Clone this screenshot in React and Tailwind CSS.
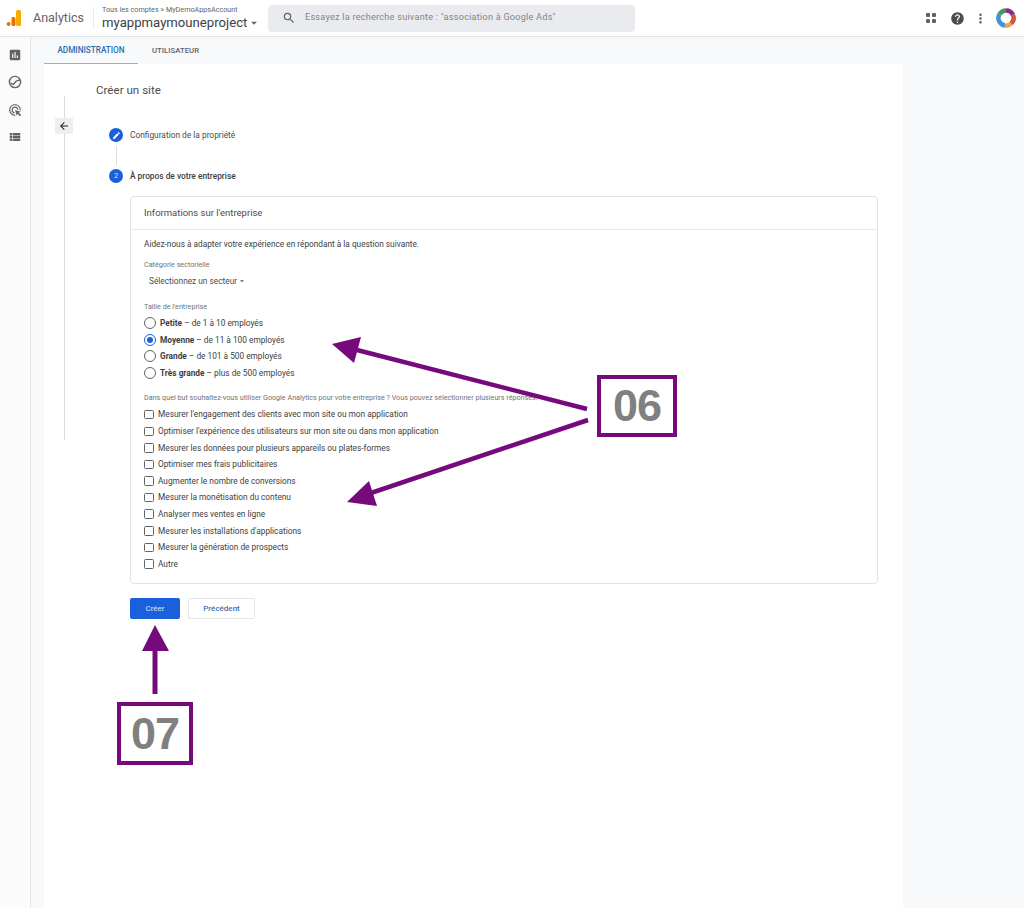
import React from "react";
import { MdAssessment, MdSearch, MdHelp, MdMoreVert, MdArrowBack, MdEdit, MdViewList, MdArrowDropDown, MdAdsClick } from "react-icons/md";

const font = "font-['Roboto','Liberation_Sans',sans-serif]";

function Logo() {
  return (
    <svg width="16" height="18" viewBox="0 0 16 18" className="shrink-0">
      <rect x="10" y="1" width="5" height="16" rx="1.5" fill="#f9ab00" />
      <rect x="5.5" y="8" width="4" height="9" rx="1.5" fill="#e37400" />
      <circle cx="2.6" cy="15" r="2" fill="#e37400" />
    </svg>
  );
}

function ExploreIcon() {
  return (
    <svg width="14" height="14" viewBox="0 0 14 14" fill="none" stroke="#5f6368" strokeWidth="1.4">
      <circle cx="7" cy="7" r="5.6" />
      <path d="M2.6 8.2 5.4 9.4 8.2 6 12 4.8" />
    </svg>
  );
}

function Avatar() {
  return (
    <svg width="20" height="20" viewBox="0 0 20 20" fill="none" strokeWidth="4.5">
      <path d="M3.6 6A7.6 7.6 0 0 1 10 2.4" stroke="#3f9b4f" />
      <path d="M10 2.4A7.6 7.6 0 0 1 17 7" stroke="#8e2a8b" />
      <path d="M17 7A7.6 7.6 0 0 1 15 15.6" stroke="#d8503f" />
      <path d="M15 15.6A7.6 7.6 0 0 1 9 17.6" stroke="#f0a53a" />
      <path d="M9 17.6A7.6 7.6 0 0 1 3.6 6" stroke="#4a90d9" />
      <path d="M10 5.5 14 10 10 14.5 6 10Z" fill="#fff" stroke="none" />
    </svg>
  );
}

function Radio({ checked, bold, rest }) {
  return (
    <div className="flex h-[16.6px] items-center">
      <span className={`flex h-[12px] w-[12px] shrink-0 items-center justify-center rounded-full border ${checked ? "border-[#1a5fdc]" : "border-[#5f6368]"}`}>
        {checked && <span className="h-[6px] w-[6px] rounded-full bg-[#1a5fdc]" />}
      </span>
      <span className="ml-[4px] whitespace-nowrap text-[8.3px] text-[#3c4043]">
        <span className="font-bold">{bold}</span> – {rest}
      </span>
    </div>
  );
}

function Check({ label }) {
  return (
    <div className="flex h-[16.6px] items-center">
      <span className="h-[9.5px] w-[9.5px] shrink-0 rounded-[1.5px] border border-[#5f6368]" />
      <span className="ml-[4.5px] whitespace-nowrap text-[8.3px] text-[#3c4043]">{label}</span>
    </div>
  );
}

function Annotations() {
  return (
    <>
      <svg className="pointer-events-none absolute left-0 top-0" width="1024" height="908" viewBox="0 0 1024 908">
        <g fill="#760a7c" stroke="#760a7c">
          <path d="M357 350 587 409" strokeWidth="4.5" fill="none" />
          <path d="M332 344 361 337 354 363Z" strokeWidth="0" />
          <path d="M365 495 588 420" strokeWidth="4.5" fill="none" />
          <path d="M347 502 369 481 377 506Z" strokeWidth="0" />
          <path d="M155 645V694" strokeWidth="5" fill="none" />
          <path d="M155 625 142 651H169Z" strokeWidth="0" />
        </g>
      </svg>
      <div className="absolute left-[597px] top-[375px] flex h-[62px] w-[80px] items-center justify-center border-[4px] border-[#760a7c] bg-white font-['Liberation_Sans',sans-serif] text-[45px] font-bold tracking-[-1px] text-[#808080]">06</div>
      <div className="absolute left-[117px] top-[702px] flex h-[63px] w-[76px] items-center justify-center border-[4px] border-[#760a7c] bg-white font-['Liberation_Sans',sans-serif] text-[45px] font-bold tracking-[-1px] text-[#808080]">07</div>
    </>
  );
}

const goals = [
  "Mesurer l'engagement des clients avec mon site ou mon application",
  "Optimiser l'expérience des utilisateurs sur mon site ou dans mon application",
  "Mesurer les données pour plusieurs appareils ou plates-formes",
  "Optimiser mes frais publicitaires",
  "Augmenter le nombre de conversions",
  "Mesurer la monétisation du contenu",
  "Analyser mes ventes en ligne",
  "Mesurer les installations d'applications",
  "Mesurer la génération de prospects",
  "Autre",
];

export default function App() {
  return (
    <div className={`relative h-[908px] w-[1024px] overflow-hidden bg-[#f8f9fb] ${font}`}>
      <header className="flex h-[37px] items-center border-b border-[#e3e4e6] bg-white">
        <div className="ml-[6px] flex w-[21px]"><Logo /></div>
        <span className="ml-[6px] w-[60px] text-[12.5px] text-[#5f6368]">Analytics</span>
        <div className="h-[22px] w-px bg-[#e8eaed]" />
        <div className="ml-[8px] flex w-[166px] flex-col">
          <span className="whitespace-nowrap text-[7.2px] leading-[9px] text-[#5f6368]">Tous les comptes &gt; MyDemoAppsAccount</span>
          <div className="flex items-center">
            <span className="whitespace-nowrap text-[13.15px] leading-[17px] text-[#3c4043]">myappmaymouneproject</span>
            <MdArrowDropDown className="text-[14px] text-[#5f6368]" />
          </div>
        </div>
        <div className="flex h-[27px] w-[367px] items-center rounded-[4px] bg-[#e9ebee]">
          <MdSearch className="ml-[14px] text-[14px] text-[#5f6368]" />
          <span className="ml-[9px] whitespace-nowrap text-[9.1px] tracking-[0.25px] text-[#80868b]">Essayez la recherche suivante : "association à Google Ads"</span>
        </div>
        <div className="ml-auto flex items-center">
          <div className="grid grid-cols-2 gap-[2px]">
            <span className="h-[4px] w-[4px] rounded-[1px] bg-[#5f6368]" />
            <span className="h-[4px] w-[4px] rounded-[1px] bg-[#5f6368]" />
            <span className="h-[4px] w-[4px] rounded-[1px] bg-[#5f6368]" />
            <span className="h-[4px] w-[4px] rounded-[1px] bg-[#5f6368]" />
          </div>
          <MdHelp className="ml-[14px] text-[15px] text-[#4a4c50]" />
          <MdMoreVert className="ml-[8px] text-[15px] text-[#5f6368]" />
          <div className="ml-[8px] mr-[8px]"><Avatar /></div>
        </div>
      </header>

      <div className="flex h-[871px]">
        <aside className="flex w-[31px] shrink-0 flex-col items-center gap-[13.4px] border-r border-[#e3e4e6] bg-[#fbfbfc] pt-[11px] text-[#5f6368]">
          <MdAssessment className="text-[14px]" />
          <ExploreIcon />
          <MdAdsClick className="text-[14px]" />
          <MdViewList className="text-[14px]" />
        </aside>

        <main className="ml-[13px] flex w-[859px] flex-col">
          <nav className="flex h-[27px]">
            <div className="flex w-[94px] items-center justify-center border-b-[1.5px] border-[#e8a33d] pt-[1px] text-[8.2px] font-medium text-[#2b6cb0]">ADMINISTRATION</div>
            <div className="ml-[14px] flex items-center pt-[1px] text-[7.8px] font-medium text-[#5f6368]">UTILISATEUR</div>
          </nav>

          <section className="flex flex-1 bg-white">
            <div className="relative ml-[20px] mt-[32px] h-[344px] w-px shrink-0 bg-[#d9dadc]">
              <button className="absolute left-[-9px] top-[22px] flex h-[16px] w-[18px] items-center justify-center bg-[#eeeeee] text-[12px] text-[#202124]">
                <MdArrowBack />
              </button>
            </div>

            <div className="ml-[31px] flex flex-col">
              <h1 className="mt-[19px] text-[11.6px] font-normal leading-[14px] text-[#4a4c50]">Créer un site</h1>

              <div className="ml-[13px] mt-[31px] flex items-center">
                <span className="flex h-[14px] w-[14px] items-center justify-center rounded-full bg-[#1a5fdc] text-[9px] text-white"><MdEdit /></span>
                <span className="ml-[7px] text-[8.35px] text-[#4a4c50]">Configuration de la propriété</span>
              </div>
              <div className="my-[4px] ml-[20px] h-[19px] w-px bg-[#dadce0]" />
              <div className="ml-[13px] flex items-center">
                <span className="flex h-[14px] w-[14px] items-center justify-center rounded-full bg-[#1a5fdc] text-[7.5px] text-[#cfe0ff]">2</span>
                <span className="ml-[7px] text-[8.35px] font-medium text-[#3c4043]">À propos de votre entreprise</span>
              </div>

              <div className="ml-[34px] mt-[13px] flex h-[388px] w-[748px] flex-col rounded-[4px] border border-[#e2e3e5]">
                <div className="flex h-[33px] shrink-0 items-center border-b border-[#e8e9eb] pl-[13px] text-[9.5px] text-[#4a4c50]">Informations sur l'entreprise</div>
                <div className="flex flex-col pl-[13px]">
                  <p className="mt-[9px] text-[8.27px] leading-[11px] text-[#3c4043]">Aidez-nous à adapter votre expérience en répondant à la question suivante.</p>
                  <p className="mt-[10px] text-[7.2px] leading-[9px] text-[#6f7378]">Catégorie sectorielle</p>
                  <div className="ml-[5px] mt-[6px] flex h-[12px] items-center text-[8.3px] text-[#4a4c50]">
                    Sélectionnez un secteur
                    <MdArrowDropDown className="text-[10px] text-[#5f6368]" />
                  </div>
                  <p className="mt-[15px] text-[7.2px] leading-[9px] text-[#6f7378]">Taille de l'entreprise</p>
                  <div className="mt-[4px] flex flex-col">
                    <Radio bold="Petite" rest="de 1 à 10 employés" />
                    <Radio checked bold="Moyenne" rest="de 11 à 100 employés" />
                    <Radio bold="Grande" rest="de 101 à 500 employés" />
                    <Radio bold="Très grande" rest="plus de 500 employés" />
                  </div>
                  <p className="mt-[12px] whitespace-nowrap text-[7.2px] leading-[9px] text-[#6f7378]">Dans quel but souhaitez-vous utiliser Google Analytics pour votre entreprise ? Vous pouvez sélectionner plusieurs réponses.</p>
                  <div className="mt-[4px] flex flex-col">
                    {goals.map((g) => <Check key={g} label={g} />)}
                  </div>
                </div>
              </div>

              <div className="ml-[34px] mt-[14px] flex gap-[8px]">
                <button className="flex h-[21px] w-[50px] items-center justify-center rounded-[2px] bg-[#1a5fdc] text-[8px] text-[#d6e4ff]">Créer</button>
                <button className="flex h-[21px] w-[67px] items-center justify-center rounded-[2px] border border-[#e4e5e7] bg-white text-[8px] font-medium text-[#3f6fa8]">Précédent</button>
              </div>
            </div>
          </section>
        </main>
      </div>

      <Annotations />
    </div>
  );
}
